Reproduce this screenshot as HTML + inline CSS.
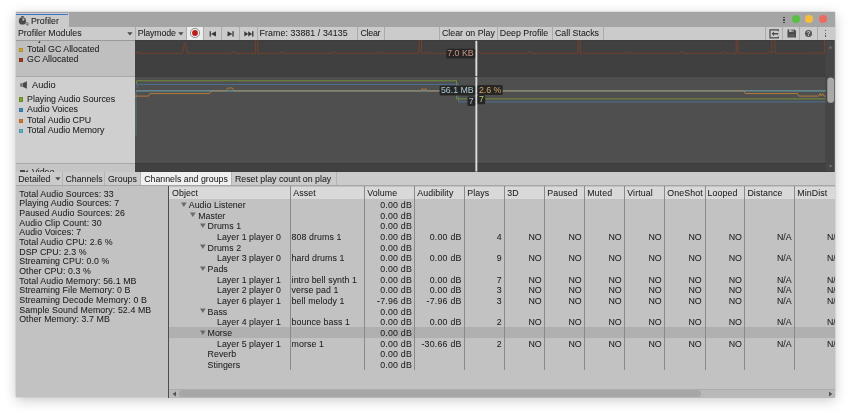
<!DOCTYPE html>
<html><head><meta charset="utf-8"><style>
html,body{margin:0;padding:0;background:#ffffff;width:850px;height:416px;overflow:hidden;position:relative}
#w div, #w svg{position:absolute}
.t{font-family:"Liberation Sans",sans-serif;-webkit-font-smoothing:antialiased;-webkit-text-stroke:0.05px currentColor;line-height:12px;white-space:nowrap}
</style></head><body><div style="position:absolute;left:15.5px;top:12.3px;width:819px;height:385.2px;box-shadow:0 3px 12px rgba(0,0,0,0.22),0 0 1.5px rgba(0,0,0,0.25)"></div><div id="w" style="position:absolute;left:0;top:0;width:834.5px;height:397.5px;overflow:hidden;will-change:transform">
<div style="left:15.5px;top:12.3px;width:819.0px;height:385.2px;background:#c2c2c2;"></div>
<div style="left:15.5px;top:12.3px;width:819.0px;height:14.5px;background:#a5a5a5;"></div>
<div style="left:15.5px;top:12.8px;width:53px;height:14px;background:#cbcbcb;"></div>
<div style="left:15.5px;top:13.9px;width:52.5px;height:1.4px;background:#3b72cc;"></div>
<svg style="left:18px;top:15px" width="12" height="12" viewBox="0 0 12 12"><rect x="3.2" y="1" width="2.6" height="1.1" rx="0.4" fill="#4a4a4a"/><circle cx="4.4" cy="5.9" r="3.6" fill="#4a4a4a"/><path d="M4.6 5.9 L4.6 3.3 A2.4 2.4 0 0 1 6.7 4.8 Z" fill="#d0d0d0"/><circle cx="8.9" cy="8.6" r="1.1" fill="none" stroke="#555" stroke-width="0.7"/><path d="M9.9 8.6 V10.8" stroke="#555" stroke-width="0.7"/></svg>
<div class="t" style="left:31px;top:15.25px;font-size:8.8px;color:#202020;">Profiler</div>
<div style="left:791.9px;top:15.3px;width:8.2px;height:8.2px;border-radius:50%;background:#57c142"></div>
<div style="left:805.3px;top:15.3px;width:8.2px;height:8.2px;border-radius:50%;background:#f6bd3b"></div>
<div style="left:818.9px;top:15.3px;width:8.2px;height:8.2px;border-radius:50%;background:#ed6a5e"></div>
<div style="left:783.2px;top:16.8px;width:1.4px;height:1.3px;background:#4a4a4a;"></div>
<div style="left:783.2px;top:19.3px;width:1.4px;height:1.3px;background:#4a4a4a;"></div>
<div style="left:783.2px;top:21.8px;width:1.4px;height:1.3px;background:#4a4a4a;"></div>
<div style="left:15.5px;top:26.5px;width:819.0px;height:13.5px;background:#cbcbcb;"></div>
<div style="left:15.5px;top:40px;width:819.0px;height:0.8px;background:#9a9a9a;"></div>
<div style="left:134.5px;top:26.5px;width:1px;height:13.5px;background:#ababab;"></div>
<div style="left:185.5px;top:26.5px;width:1px;height:13.5px;background:#ababab;"></div>
<div style="left:203.2px;top:26.5px;width:1px;height:13.5px;background:#ababab;"></div>
<div style="left:221.4px;top:26.5px;width:1px;height:13.5px;background:#ababab;"></div>
<div style="left:239.4px;top:26.5px;width:1px;height:13.5px;background:#ababab;"></div>
<div style="left:257.4px;top:26.5px;width:1px;height:13.5px;background:#ababab;"></div>
<div style="left:356.9px;top:26.5px;width:1px;height:13.5px;background:#ababab;"></div>
<div style="left:384px;top:26.5px;width:1px;height:13.5px;background:#ababab;"></div>
<div style="left:438.8px;top:26.5px;width:1px;height:13.5px;background:#ababab;"></div>
<div style="left:497px;top:26.5px;width:1px;height:13.5px;background:#ababab;"></div>
<div style="left:552.2px;top:26.5px;width:1px;height:13.5px;background:#ababab;"></div>
<div style="left:603.2px;top:26.5px;width:1px;height:13.5px;background:#ababab;"></div>
<div style="left:765px;top:26.5px;width:1px;height:13.5px;background:#ababab;"></div>
<div style="left:782.2px;top:26.5px;width:1px;height:13.5px;background:#ababab;"></div>
<div style="left:799.2px;top:26.5px;width:1px;height:13.5px;background:#ababab;"></div>
<div style="left:816.8px;top:26.5px;width:1px;height:13.5px;background:#ababab;"></div>
<div class="t" style="left:18px;top:27.35px;font-size:8.8px;color:#1c1c1c;">Profiler Modules</div>
<svg style="left:126.5px;top:31.8px" width="6" height="4" viewBox="0 0 6 4"><path d="M0.3 0.3 H5.5 L2.9 3.6 Z" fill="#4a4a4a"/></svg>
<div class="t" style="left:137.8px;top:27.35px;font-size:8.8px;color:#1c1c1c;letter-spacing:-0.16px;">Playmode</div>
<svg style="left:177.8px;top:31.8px" width="6" height="4" viewBox="0 0 6 4"><path d="M0.3 0.3 H5.5 L2.9 3.6 Z" fill="#4a4a4a"/></svg>
<div style="left:186.5px;top:26.7px;width:16.5px;height:13px;background:#ececec;"></div>
<svg style="left:189px;top:27px" width="12" height="12" viewBox="0 0 12 12"><circle cx="6" cy="6" r="4.6" fill="none" stroke="#7a7a7a" stroke-width="0.8"/><circle cx="6" cy="6" r="2.9" fill="#bb1f1b"/></svg>
<svg style="left:209px;top:30.5px" width="8" height="6" viewBox="0 0 8 6"><rect x="0.6" y="0.2" width="1.3" height="5.4" fill="#3a3a3a"/><path d="M7 0.2 V5.6 L1.9 2.9 Z" fill="#3a3a3a"/></svg>
<svg style="left:227px;top:30.5px" width="8" height="6" viewBox="0 0 8 6"><path d="M0.5 0.2 V5.6 L5.4 2.9 Z" fill="#3a3a3a"/><rect x="5.4" y="0.2" width="1.3" height="5.4" fill="#3a3a3a"/></svg>
<svg style="left:243.5px;top:30.5px" width="11" height="6" viewBox="0 0 11 6"><path d="M0.3 0.2 V5.6 L4.2 2.9 Z" fill="#3a3a3a"/><path d="M4.2 0.2 V5.6 L8.1 2.9 Z" fill="#3a3a3a"/><rect x="8.1" y="0.2" width="1.4" height="5.4" fill="#3a3a3a"/></svg>
<div class="t" style="left:259.6px;top:27.35px;font-size:8.8px;color:#1c1c1c;letter-spacing:0.08px;">Frame: 33881 / 34135</div>
<div class="t" style="left:360.4px;top:27.35px;font-size:8.8px;color:#1c1c1c;letter-spacing:-0.22px;">Clear</div>
<div class="t" style="left:442px;top:27.35px;font-size:8.8px;color:#1c1c1c;">Clear on Play</div>
<div class="t" style="left:499.8px;top:27.35px;font-size:8.8px;color:#1c1c1c;">Deep Profile</div>
<div class="t" style="left:555px;top:27.35px;font-size:8.8px;color:#1c1c1c;">Call Stacks</div>
<svg style="left:769px;top:28.8px" width="11" height="10" viewBox="0 0 11 10"><path d="M9.3 2.2 V0.8 H1 V8.8 H9.3 V7.4" fill="none" stroke="#4a4a4a" stroke-width="1.2"/><path d="M2.6 4.8 L5 2.6 V4.1 H9.4 V5.5 H5 V7 Z" fill="#4a4a4a"/></svg>
<svg style="left:786.5px;top:28.8px" width="10" height="10" viewBox="0 0 10 10"><path d="M0.5 0.5 H7.5 L9 2 V8.6 H0.5 Z" fill="#4a4a4a"/><rect x="2.2" y="0.5" width="4.2" height="2.4" fill="#cbcbcb"/><rect x="4.5" y="0.9" width="1.2" height="1.6" fill="#4a4a4a"/><rect x="2" y="5" width="5.5" height="3" fill="#5a5a5a"/></svg>
<div style="left:804.9px;top:29.8px;width:7px;height:7px;border-radius:50%;background:#555"></div>
<div class="t" style="left:805px;top:28.6px;width:7px;text-align:center;font-size:6.5px;font-weight:bold;color:#cbcbcb;line-height:9px">?</div>
<div style="left:824.9px;top:29.9px;width:1.3px;height:1.3px;background:#555555;"></div>
<div style="left:824.9px;top:32.6px;width:1.3px;height:1.3px;background:#555555;"></div>
<div style="left:824.9px;top:35.3px;width:1.3px;height:1.3px;background:#555555;"></div>
<div style="left:15.5px;top:40.8px;width:119.5px;height:131px;background:#a8a8a8;"></div>
<div style="left:15.5px;top:40.8px;width:119.5px;height:35.4px;background:#bfbfbf;"></div>
<div style="left:15.5px;top:77px;width:119.5px;height:85.8px;background:#cfcfcf;"></div>
<div style="left:15.5px;top:164px;width:119.5px;height:7.5px;background:#c5c5c5;"></div>
<div style="left:15px;top:40.8px;width:120px;height:2px;overflow:hidden;position:absolute"><div style="left:3.3px;top:-4px;width:4.3px;height:4.3px;background:#5a8a9a"></div><div class="t" style="left:12px;top:-8.40px;font-size:8.8px;color:#1c1c1c">Object Count</div></div>
<div style="left:18.7px;top:47.6px;width:4.4px;height:4.4px;background:#d2a42c;box-shadow:inset 0 0 0 0.6px rgba(0,0,0,0.22);"></div>
<div class="t" style="left:27.1px;top:43.05px;font-size:8.8px;color:#1c1c1c;">Total GC Allocated</div>
<div style="left:18.7px;top:57.8px;width:4.4px;height:4.4px;background:#a03a16;box-shadow:inset 0 0 0 0.6px rgba(0,0,0,0.22);"></div>
<div class="t" style="left:27.1px;top:53.25px;font-size:8.8px;color:#1c1c1c;">GC Allocated</div>
<svg style="left:19.5px;top:80.8px" width="8" height="8" viewBox="0 0 8 8"><rect x="0.4" y="2.3" width="1.3" height="3.4" fill="#4a4a4a"/><path d="M2.5 2.3 L6.9 0.3 V7.7 L2.5 5.7 Z" fill="#4a4a4a"/></svg>
<div class="t" style="left:32.1px;top:78.91px;font-size:9.2px;color:#1c1c1c;">Audio</div>
<div style="left:18.7px;top:97.4px;width:4.4px;height:4.4px;background:#7aa52a;box-shadow:inset 0 0 0 0.6px rgba(0,0,0,0.22);"></div>
<div class="t" style="left:27.1px;top:92.75px;font-size:8.8px;color:#1c1c1c;">Playing Audio Sources</div>
<div style="left:18.7px;top:107.95px;width:4.4px;height:4.4px;background:#3c8bbf;box-shadow:inset 0 0 0 0.6px rgba(0,0,0,0.22);"></div>
<div class="t" style="left:27.1px;top:103.30px;font-size:8.8px;color:#1c1c1c;">Audio Voices</div>
<div style="left:18.7px;top:118.5px;width:4.4px;height:4.4px;background:#d97a2a;box-shadow:inset 0 0 0 0.6px rgba(0,0,0,0.22);"></div>
<div class="t" style="left:27.1px;top:113.85px;font-size:8.8px;color:#1c1c1c;">Total Audio CPU</div>
<div style="left:18.7px;top:129.05px;width:4.4px;height:4.4px;background:#59b2c6;box-shadow:inset 0 0 0 0.6px rgba(0,0,0,0.22);"></div>
<div class="t" style="left:27.1px;top:124.40px;font-size:8.8px;color:#1c1c1c;">Total Audio Memory</div>
<div style="left:15px;top:164px;width:120px;height:7.5px;overflow:hidden;position:absolute"><svg style="left:5px;top:5.5px" width="8" height="6" viewBox="0 0 8 6"><rect x="0" y="0" width="5" height="6" fill="#4a4a4a"/><path d="M5 2 L8 0 V6 L5 4Z" fill="#4a4a4a"/></svg><div class="t" style="left:17px;top:2.45px;font-size:8.8px;color:#1c1c1c">Video</div></div>
<svg style="left:135px;top:40px" width="699.5" height="132" viewBox="135 40 699.5 132"><rect x="135" y="40" width="699.5" height="132" fill="#3c3c3c"/><rect x="135" y="40.8" width="690.7" height="35.6" fill="#404040"/><rect x="135" y="77" width="690.7" height="86" fill="#4f4f4f"/><rect x="135" y="164" width="690.7" height="7.5" fill="#414141"/><rect x="825.7" y="40.8" width="8.799999999999955" height="130.7" fill="#464646"/><rect x="827.3" y="77.6" width="6.8" height="25.2" rx="3.4" fill="#a9a9a9"/><path d="M828.5 48.5 L830.6 45.8 L832.7 48.5Z" fill="#6a6a6a"/><path d="M828.5 165 L830.6 167.7 L832.7 165Z" fill="#6a6a6a"/><path d="M135,51.8 L136.5,53.3 L136.4,53.3 L138.0,51.3 L139.6,53.3 L182.6,53.3 L184.6,42.6 L185.4,42.6 L187.6,53.3 L231.4,53.3 L233,51.3 L234.6,53.3 L255.6,53.3 L255.6,40 M257.8,40 L257.8,53.3 L280.4,53.3 L282,51.3 L283.6,53.3 L332.4,53.3 L334,51.3 L335.6,53.3 L379.4,53.3 L381,51.3 L382.6,53.3 L419.2,53.3 L419.2,40 M421.6,40 L421.6,53.3 L425.4,53.3 L427,51.3 L428.6,53.3 L477.4,53.3 L479,51.3 L480.6,53.3 L527.8,53.3 L529.4,51.3 L531.0,53.3 L578,53.3 L578,40 M580.2,40 L580.2,53.3 L627.4,53.3 L629,51.3 L630.6,53.3 L679.8,53.3 L681.4,51.3 L683.0,53.3 L722.6999999999999,53.3 L724.3,51.3 L725.9,53.3 L736.2,53.3 L736.2,40 M738,40 L738,53.3 L767.8,53.3 L769.4,51.3 L771.0,53.3 L771.8,53.3 L771.8,40 M775,40 L775,53.3 L814.4,53.3 L816,51.3 L817.6,53.3 L824.5,53.3 L824.5,40" fill="none" stroke="#74402c" stroke-width="1"/><path d="M137.2,88 L137.2,84.4 L458.6,84.4 L458.6,101.9 L825.7,101.9" fill="none" stroke="#4a7194" stroke-width="1"/><path d="M136.6,84 L136.6,80.8 L456.6,80.8 L456.6,98.9 L825.7,98.9" fill="none" stroke="#738e3c" stroke-width="1"/><path d="M136,90.9 L825.7,90.9" fill="none" stroke="#6b9ba6" stroke-width="1"/><path d="M136,135.5 V90.9" fill="none" stroke="#5f8f8a" stroke-width="0.8" stroke-opacity="0.7"/><path d="M135,96.1 L148.5,96.1 L150,93.5 L209.5,93.5 L211,90.9 L226.4,90.9 L227.6,88 L232.6,88 L234,90.9 L421,90.9 L422.5,88.3 L424,90.9 L425.5,88.3 L427,90.9 L744,90.9 L745.2,93.5 L797.5,93.5 L798.8,96.1 L818.6,96.1 L820,93.5 L821.3,96.1 L822.6,93.5 L824,96.1 L825.7,96.1" fill="none" stroke="#b27a3c" stroke-width="1"/><path d="M136,90.9 L825.7,90.9" fill="none" stroke="#6b9ba6" stroke-width="1" stroke-opacity="0.5"/><rect x="475.4" y="40.8" width="1.9" height="35.4" fill="#dddddd"/><rect x="475.4" y="77" width="1.9" height="94.5" fill="#dddddd"/><rect x="446.3" y="48.8" width="28.899999999999977" height="9.800000000000004" rx="1.5" fill="#262626"/><text x="473.7" y="56.300000000000004" text-anchor="end" font-family="Liberation Sans" font-size="8.8" fill="#c99580">7.0 KB</text><rect x="439.5" y="85.6" width="35.69999999999999" height="10.0" rx="1.5" fill="#262626"/><text x="473.7" y="93.3" text-anchor="end" font-family="Liberation Sans" font-size="8.8" fill="#a9c9d2">56.1 MB</text><rect x="467.4" y="96.4" width="7.800000000000011" height="9.5" rx="1.5" fill="#262626"/><text x="473.7" y="103.60000000000001" text-anchor="end" font-family="Liberation Sans" font-size="8.8" fill="#a4bcd6">7</text><rect x="477.4" y="85" width="25.30000000000001" height="10" rx="1.5" fill="#262626"/><text x="478.9" y="92.7" text-anchor="start" font-family="Liberation Sans" font-size="8.8" fill="#d4a565">2.6 %</text><rect x="477.4" y="95" width="7.800000000000011" height="9.299999999999997" rx="1.5" fill="#262626"/><text x="478.9" y="102.0" text-anchor="start" font-family="Liberation Sans" font-size="8.8" fill="#bcca7c">7</text></svg>
<div style="left:15.5px;top:171.5px;width:819.0px;height:13.7px;background:#cbcbcb;"></div>
<div style="left:141px;top:171.5px;width:90px;height:13.5px;background:#f0f0f0;"></div>
<div style="left:62px;top:171.6px;width:1px;height:13.4px;background:#b4b4b4;"></div>
<div style="left:104.4px;top:171.6px;width:1px;height:13.4px;background:#b4b4b4;"></div>
<div style="left:140.4px;top:171.6px;width:1px;height:13.4px;background:#b4b4b4;"></div>
<div style="left:231px;top:171.6px;width:1px;height:13.4px;background:#b4b4b4;"></div>
<div style="left:336px;top:171.6px;width:1px;height:13.4px;background:#b4b4b4;"></div>
<div class="t" style="left:18.2px;top:172.95px;font-size:8.8px;color:#1c1c1c;">Detailed</div>
<svg style="left:54.5px;top:177.3px" width="6" height="4" viewBox="0 0 6 4"><path d="M0.3 0.3 H5.5 L2.9 3.6 Z" fill="#4a4a4a"/></svg>
<div class="t" style="left:65.4px;top:172.95px;font-size:8.8px;color:#1c1c1c;">Channels</div>
<div class="t" style="left:108px;top:172.95px;font-size:8.8px;color:#1c1c1c;">Groups</div>
<div class="t" style="left:144.2px;top:172.95px;font-size:8.8px;color:#1c1c1c;">Channels and groups</div>
<div class="t" style="left:234.9px;top:172.95px;font-size:8.8px;color:#1c1c1c;">Reset play count on play</div>
<div style="left:15.5px;top:185.2px;width:819.0px;height:1.2px;background:#a6a6a6;"></div>
<div class="t" style="left:19.2px;top:187.55px;font-size:8.8px;color:#1c1c1c;letter-spacing:0.09px;">Total Audio Sources: 33</div>
<div class="t" style="left:19.2px;top:197.23px;font-size:8.8px;color:#1c1c1c;letter-spacing:0.09px;">Playing Audio Sources: 7</div>
<div class="t" style="left:19.2px;top:206.91px;font-size:8.8px;color:#1c1c1c;letter-spacing:0.09px;">Paused Audio Sources: 26</div>
<div class="t" style="left:19.2px;top:216.59px;font-size:8.8px;color:#1c1c1c;letter-spacing:0.09px;">Audio Clip Count: 30</div>
<div class="t" style="left:19.2px;top:226.27px;font-size:8.8px;color:#1c1c1c;letter-spacing:0.09px;">Audio Voices: 7</div>
<div class="t" style="left:19.2px;top:235.95px;font-size:8.8px;color:#1c1c1c;letter-spacing:0.09px;">Total Audio CPU: 2.6 %</div>
<div class="t" style="left:19.2px;top:245.63px;font-size:8.8px;color:#1c1c1c;letter-spacing:0.09px;">DSP CPU: 2.3 %</div>
<div class="t" style="left:19.2px;top:255.31px;font-size:8.8px;color:#1c1c1c;letter-spacing:0.09px;">Streaming CPU: 0.0 %</div>
<div class="t" style="left:19.2px;top:264.99px;font-size:8.8px;color:#1c1c1c;letter-spacing:0.09px;">Other CPU: 0.3 %</div>
<div class="t" style="left:19.2px;top:274.67px;font-size:8.8px;color:#1c1c1c;letter-spacing:0.09px;">Total Audio Memory: 56.1 MB</div>
<div class="t" style="left:19.2px;top:284.35px;font-size:8.8px;color:#1c1c1c;letter-spacing:0.09px;">Streaming File Memory: 0 B</div>
<div class="t" style="left:19.2px;top:294.03px;font-size:8.8px;color:#1c1c1c;letter-spacing:0.09px;">Streaming Decode Memory: 0 B</div>
<div class="t" style="left:19.2px;top:303.71px;font-size:8.8px;color:#1c1c1c;letter-spacing:0.09px;">Sample Sound Memory: 52.4 MB</div>
<div class="t" style="left:19.2px;top:313.39px;font-size:8.8px;color:#1c1c1c;letter-spacing:0.09px;">Other Memory: 3.7 MB</div>
<div style="left:168px;top:186px;width:1px;height:211.5px;background:#4d4d4d;"></div>
<div style="left:169px;top:186.5px;width:665.5px;height:12.8px;background:#d9d9d9;"></div>
<div style="left:169px;top:199.3px;width:665.5px;height:190px;background:#c2c2c2;"></div>
<div style="left:169px;top:327.34000000000003px;width:665.5px;height:10.67px;background:#b0b0b0;"></div>
<div style="left:290.3px;top:186px;width:1px;height:184.01999999999998px;background:#8a8a8a;"></div>
<div style="left:364.3px;top:186px;width:1px;height:184.01999999999998px;background:#8a8a8a;"></div>
<div style="left:414.2px;top:186px;width:1px;height:184.01999999999998px;background:#8a8a8a;"></div>
<div style="left:464.3px;top:186px;width:1px;height:184.01999999999998px;background:#8a8a8a;"></div>
<div style="left:504.2px;top:186px;width:1px;height:184.01999999999998px;background:#8a8a8a;"></div>
<div style="left:544.3px;top:186px;width:1px;height:184.01999999999998px;background:#8a8a8a;"></div>
<div style="left:584.2px;top:186px;width:1px;height:184.01999999999998px;background:#8a8a8a;"></div>
<div style="left:624.3px;top:186px;width:1px;height:184.01999999999998px;background:#8a8a8a;"></div>
<div style="left:664.3px;top:186px;width:1px;height:184.01999999999998px;background:#8a8a8a;"></div>
<div style="left:704.5px;top:186px;width:1px;height:184.01999999999998px;background:#8a8a8a;"></div>
<div style="left:744.4px;top:186px;width:1px;height:184.01999999999998px;background:#8a8a8a;"></div>
<div style="left:794.3px;top:186px;width:1px;height:184.01999999999998px;background:#8a8a8a;"></div>
<div class="t" style="left:172px;top:187.25px;font-size:8.8px;color:#1c1c1c;letter-spacing:0.1px;">Object</div>
<div class="t" style="left:293.3px;top:187.25px;font-size:8.8px;color:#1c1c1c;letter-spacing:0.1px;">Asset</div>
<div class="t" style="left:367.3px;top:187.25px;font-size:8.8px;color:#1c1c1c;letter-spacing:0.1px;">Volume</div>
<div class="t" style="left:417.2px;top:187.25px;font-size:8.8px;color:#1c1c1c;letter-spacing:0.1px;">Audibility</div>
<div class="t" style="left:467.3px;top:187.25px;font-size:8.8px;color:#1c1c1c;letter-spacing:0.1px;">Plays</div>
<div class="t" style="left:507.2px;top:187.25px;font-size:8.8px;color:#1c1c1c;letter-spacing:0.1px;">3D</div>
<div class="t" style="left:547.3px;top:187.25px;font-size:8.8px;color:#1c1c1c;letter-spacing:0.1px;">Paused</div>
<div class="t" style="left:587.2px;top:187.25px;font-size:8.8px;color:#1c1c1c;letter-spacing:0.1px;">Muted</div>
<div class="t" style="left:627.3px;top:187.25px;font-size:8.8px;color:#1c1c1c;letter-spacing:0.1px;">Virtual</div>
<div class="t" style="left:667.3px;top:187.25px;font-size:8.8px;color:#1c1c1c;letter-spacing:0.1px;">OneShot</div>
<div class="t" style="left:707.5px;top:187.25px;font-size:8.8px;color:#1c1c1c;letter-spacing:0.1px;">Looped</div>
<div class="t" style="left:747.4px;top:187.25px;font-size:8.8px;color:#1c1c1c;letter-spacing:0.1px;">Distance</div>
<div class="t" style="left:797.3px;top:187.25px;font-size:8.8px;color:#1c1c1c;letter-spacing:0.1px;">MinDist</div>
<svg style="left:180.85px;top:201.70px" width="6" height="6" viewBox="0 0 6 6"><path d="M0 0.4 H5.6 L2.8 5.1 Z" fill="#6a6a6a"/></svg>
<div class="t" style="left:188.75px;top:198.85px;font-size:8.8px;color:#1c1c1c;letter-spacing:0.05px;">Audio Listener</div>
<div class="t" style="left:352px;top:198.85px;width:60px;text-align:right;font-size:8.8px;color:#1c1c1c;letter-spacing:0.22px;">0.00 dB</div>
<svg style="left:190.25px;top:212.37px" width="6" height="6" viewBox="0 0 6 6"><path d="M0 0.4 H5.6 L2.8 5.1 Z" fill="#6a6a6a"/></svg>
<div class="t" style="left:198.15px;top:209.52px;font-size:8.8px;color:#1c1c1c;letter-spacing:0.05px;">Master</div>
<div class="t" style="left:352px;top:209.52px;width:60px;text-align:right;font-size:8.8px;color:#1c1c1c;letter-spacing:0.22px;">0.00 dB</div>
<svg style="left:199.65px;top:223.04px" width="6" height="6" viewBox="0 0 6 6"><path d="M0 0.4 H5.6 L2.8 5.1 Z" fill="#6a6a6a"/></svg>
<div class="t" style="left:207.55px;top:220.19px;font-size:8.8px;color:#1c1c1c;letter-spacing:0.05px;">Drums 1</div>
<div class="t" style="left:352px;top:220.19px;width:60px;text-align:right;font-size:8.8px;color:#1c1c1c;letter-spacing:0.22px;">0.00 dB</div>
<div class="t" style="left:216.95px;top:230.86px;font-size:8.8px;color:#1c1c1c;letter-spacing:0.05px;">Layer 1 player 0</div>
<div class="t" style="left:291.6px;top:230.86px;font-size:8.8px;color:#1c1c1c;letter-spacing:0.08px;">808 drums 1</div>
<div class="t" style="left:352px;top:230.86px;width:60px;text-align:right;font-size:8.8px;color:#1c1c1c;letter-spacing:0.22px;">0.00 dB</div>
<div class="t" style="left:401.6px;top:230.86px;width:60px;text-align:right;font-size:8.8px;color:#1c1c1c;letter-spacing:0.22px;">0.00 dB</div>
<div class="t" style="left:461.6px;top:230.86px;width:40px;text-align:right;font-size:8.8px;color:#1c1c1c;">4</div>
<div class="t" style="left:501.6px;top:230.86px;width:40px;text-align:right;font-size:8.8px;color:#1c1c1c;">NO</div>
<div class="t" style="left:541.6999999999999px;top:230.86px;width:40px;text-align:right;font-size:8.8px;color:#1c1c1c;">NO</div>
<div class="t" style="left:581.6px;top:230.86px;width:40px;text-align:right;font-size:8.8px;color:#1c1c1c;">NO</div>
<div class="t" style="left:621.6999999999999px;top:230.86px;width:40px;text-align:right;font-size:8.8px;color:#1c1c1c;">NO</div>
<div class="t" style="left:661.6999999999999px;top:230.86px;width:40px;text-align:right;font-size:8.8px;color:#1c1c1c;">NO</div>
<div class="t" style="left:701.9px;top:230.86px;width:40px;text-align:right;font-size:8.8px;color:#1c1c1c;">NO</div>
<div class="t" style="left:751.6px;top:230.86px;width:40px;text-align:right;font-size:8.8px;color:#1c1c1c;">N/A</div>
<div class="t" style="left:801.6px;top:230.86px;width:40px;text-align:right;font-size:8.8px;color:#1c1c1c;">N/A</div>
<svg style="left:199.65px;top:244.38px" width="6" height="6" viewBox="0 0 6 6"><path d="M0 0.4 H5.6 L2.8 5.1 Z" fill="#6a6a6a"/></svg>
<div class="t" style="left:207.55px;top:241.53px;font-size:8.8px;color:#1c1c1c;letter-spacing:0.05px;">Drums 2</div>
<div class="t" style="left:352px;top:241.53px;width:60px;text-align:right;font-size:8.8px;color:#1c1c1c;letter-spacing:0.22px;">0.00 dB</div>
<div class="t" style="left:216.95px;top:252.20px;font-size:8.8px;color:#1c1c1c;letter-spacing:0.05px;">Layer 3 player 0</div>
<div class="t" style="left:291.6px;top:252.20px;font-size:8.8px;color:#1c1c1c;letter-spacing:0.08px;">hard drums 1</div>
<div class="t" style="left:352px;top:252.20px;width:60px;text-align:right;font-size:8.8px;color:#1c1c1c;letter-spacing:0.22px;">0.00 dB</div>
<div class="t" style="left:401.6px;top:252.20px;width:60px;text-align:right;font-size:8.8px;color:#1c1c1c;letter-spacing:0.22px;">0.00 dB</div>
<div class="t" style="left:461.6px;top:252.20px;width:40px;text-align:right;font-size:8.8px;color:#1c1c1c;">9</div>
<div class="t" style="left:501.6px;top:252.20px;width:40px;text-align:right;font-size:8.8px;color:#1c1c1c;">NO</div>
<div class="t" style="left:541.6999999999999px;top:252.20px;width:40px;text-align:right;font-size:8.8px;color:#1c1c1c;">NO</div>
<div class="t" style="left:581.6px;top:252.20px;width:40px;text-align:right;font-size:8.8px;color:#1c1c1c;">NO</div>
<div class="t" style="left:621.6999999999999px;top:252.20px;width:40px;text-align:right;font-size:8.8px;color:#1c1c1c;">NO</div>
<div class="t" style="left:661.6999999999999px;top:252.20px;width:40px;text-align:right;font-size:8.8px;color:#1c1c1c;">NO</div>
<div class="t" style="left:701.9px;top:252.20px;width:40px;text-align:right;font-size:8.8px;color:#1c1c1c;">NO</div>
<div class="t" style="left:751.6px;top:252.20px;width:40px;text-align:right;font-size:8.8px;color:#1c1c1c;">N/A</div>
<div class="t" style="left:801.6px;top:252.20px;width:40px;text-align:right;font-size:8.8px;color:#1c1c1c;">N/A</div>
<svg style="left:199.65px;top:265.72px" width="6" height="6" viewBox="0 0 6 6"><path d="M0 0.4 H5.6 L2.8 5.1 Z" fill="#6a6a6a"/></svg>
<div class="t" style="left:207.55px;top:262.87px;font-size:8.8px;color:#1c1c1c;letter-spacing:0.05px;">Pads</div>
<div class="t" style="left:352px;top:262.87px;width:60px;text-align:right;font-size:8.8px;color:#1c1c1c;letter-spacing:0.22px;">0.00 dB</div>
<div class="t" style="left:216.95px;top:273.54px;font-size:8.8px;color:#1c1c1c;letter-spacing:0.05px;">Layer 1 player 1</div>
<div class="t" style="left:291.6px;top:273.54px;font-size:8.8px;color:#1c1c1c;letter-spacing:0.08px;">intro bell synth 1</div>
<div class="t" style="left:352px;top:273.54px;width:60px;text-align:right;font-size:8.8px;color:#1c1c1c;letter-spacing:0.22px;">0.00 dB</div>
<div class="t" style="left:401.6px;top:273.54px;width:60px;text-align:right;font-size:8.8px;color:#1c1c1c;letter-spacing:0.22px;">0.00 dB</div>
<div class="t" style="left:461.6px;top:273.54px;width:40px;text-align:right;font-size:8.8px;color:#1c1c1c;">7</div>
<div class="t" style="left:501.6px;top:273.54px;width:40px;text-align:right;font-size:8.8px;color:#1c1c1c;">NO</div>
<div class="t" style="left:541.6999999999999px;top:273.54px;width:40px;text-align:right;font-size:8.8px;color:#1c1c1c;">NO</div>
<div class="t" style="left:581.6px;top:273.54px;width:40px;text-align:right;font-size:8.8px;color:#1c1c1c;">NO</div>
<div class="t" style="left:621.6999999999999px;top:273.54px;width:40px;text-align:right;font-size:8.8px;color:#1c1c1c;">NO</div>
<div class="t" style="left:661.6999999999999px;top:273.54px;width:40px;text-align:right;font-size:8.8px;color:#1c1c1c;">NO</div>
<div class="t" style="left:701.9px;top:273.54px;width:40px;text-align:right;font-size:8.8px;color:#1c1c1c;">NO</div>
<div class="t" style="left:751.6px;top:273.54px;width:40px;text-align:right;font-size:8.8px;color:#1c1c1c;">N/A</div>
<div class="t" style="left:801.6px;top:273.54px;width:40px;text-align:right;font-size:8.8px;color:#1c1c1c;">N/A</div>
<div class="t" style="left:216.95px;top:284.21px;font-size:8.8px;color:#1c1c1c;letter-spacing:0.05px;">Layer 2 player 0</div>
<div class="t" style="left:291.6px;top:284.21px;font-size:8.8px;color:#1c1c1c;letter-spacing:0.08px;">verse pad 1</div>
<div class="t" style="left:352px;top:284.21px;width:60px;text-align:right;font-size:8.8px;color:#1c1c1c;letter-spacing:0.22px;">0.00 dB</div>
<div class="t" style="left:401.6px;top:284.21px;width:60px;text-align:right;font-size:8.8px;color:#1c1c1c;letter-spacing:0.22px;">0.00 dB</div>
<div class="t" style="left:461.6px;top:284.21px;width:40px;text-align:right;font-size:8.8px;color:#1c1c1c;">3</div>
<div class="t" style="left:501.6px;top:284.21px;width:40px;text-align:right;font-size:8.8px;color:#1c1c1c;">NO</div>
<div class="t" style="left:541.6999999999999px;top:284.21px;width:40px;text-align:right;font-size:8.8px;color:#1c1c1c;">NO</div>
<div class="t" style="left:581.6px;top:284.21px;width:40px;text-align:right;font-size:8.8px;color:#1c1c1c;">NO</div>
<div class="t" style="left:621.6999999999999px;top:284.21px;width:40px;text-align:right;font-size:8.8px;color:#1c1c1c;">NO</div>
<div class="t" style="left:661.6999999999999px;top:284.21px;width:40px;text-align:right;font-size:8.8px;color:#1c1c1c;">NO</div>
<div class="t" style="left:701.9px;top:284.21px;width:40px;text-align:right;font-size:8.8px;color:#1c1c1c;">NO</div>
<div class="t" style="left:751.6px;top:284.21px;width:40px;text-align:right;font-size:8.8px;color:#1c1c1c;">N/A</div>
<div class="t" style="left:801.6px;top:284.21px;width:40px;text-align:right;font-size:8.8px;color:#1c1c1c;">N/A</div>
<div class="t" style="left:216.95px;top:294.88px;font-size:8.8px;color:#1c1c1c;letter-spacing:0.05px;">Layer 6 player 1</div>
<div class="t" style="left:291.6px;top:294.88px;font-size:8.8px;color:#1c1c1c;letter-spacing:0.08px;">bell melody 1</div>
<div class="t" style="left:352px;top:294.88px;width:60px;text-align:right;font-size:8.8px;color:#1c1c1c;letter-spacing:0.22px;">-7.96 dB</div>
<div class="t" style="left:401.6px;top:294.88px;width:60px;text-align:right;font-size:8.8px;color:#1c1c1c;letter-spacing:0.22px;">-7.96 dB</div>
<div class="t" style="left:461.6px;top:294.88px;width:40px;text-align:right;font-size:8.8px;color:#1c1c1c;">3</div>
<div class="t" style="left:501.6px;top:294.88px;width:40px;text-align:right;font-size:8.8px;color:#1c1c1c;">NO</div>
<div class="t" style="left:541.6999999999999px;top:294.88px;width:40px;text-align:right;font-size:8.8px;color:#1c1c1c;">NO</div>
<div class="t" style="left:581.6px;top:294.88px;width:40px;text-align:right;font-size:8.8px;color:#1c1c1c;">NO</div>
<div class="t" style="left:621.6999999999999px;top:294.88px;width:40px;text-align:right;font-size:8.8px;color:#1c1c1c;">NO</div>
<div class="t" style="left:661.6999999999999px;top:294.88px;width:40px;text-align:right;font-size:8.8px;color:#1c1c1c;">NO</div>
<div class="t" style="left:701.9px;top:294.88px;width:40px;text-align:right;font-size:8.8px;color:#1c1c1c;">NO</div>
<div class="t" style="left:751.6px;top:294.88px;width:40px;text-align:right;font-size:8.8px;color:#1c1c1c;">N/A</div>
<div class="t" style="left:801.6px;top:294.88px;width:40px;text-align:right;font-size:8.8px;color:#1c1c1c;">N/A</div>
<svg style="left:199.65px;top:308.40px" width="6" height="6" viewBox="0 0 6 6"><path d="M0 0.4 H5.6 L2.8 5.1 Z" fill="#6a6a6a"/></svg>
<div class="t" style="left:207.55px;top:305.55px;font-size:8.8px;color:#1c1c1c;letter-spacing:0.05px;">Bass</div>
<div class="t" style="left:352px;top:305.55px;width:60px;text-align:right;font-size:8.8px;color:#1c1c1c;letter-spacing:0.22px;">0.00 dB</div>
<div class="t" style="left:216.95px;top:316.22px;font-size:8.8px;color:#1c1c1c;letter-spacing:0.05px;">Layer 4 player 1</div>
<div class="t" style="left:291.6px;top:316.22px;font-size:8.8px;color:#1c1c1c;letter-spacing:0.08px;">bounce bass 1</div>
<div class="t" style="left:352px;top:316.22px;width:60px;text-align:right;font-size:8.8px;color:#1c1c1c;letter-spacing:0.22px;">0.00 dB</div>
<div class="t" style="left:401.6px;top:316.22px;width:60px;text-align:right;font-size:8.8px;color:#1c1c1c;letter-spacing:0.22px;">0.00 dB</div>
<div class="t" style="left:461.6px;top:316.22px;width:40px;text-align:right;font-size:8.8px;color:#1c1c1c;">2</div>
<div class="t" style="left:501.6px;top:316.22px;width:40px;text-align:right;font-size:8.8px;color:#1c1c1c;">NO</div>
<div class="t" style="left:541.6999999999999px;top:316.22px;width:40px;text-align:right;font-size:8.8px;color:#1c1c1c;">NO</div>
<div class="t" style="left:581.6px;top:316.22px;width:40px;text-align:right;font-size:8.8px;color:#1c1c1c;">NO</div>
<div class="t" style="left:621.6999999999999px;top:316.22px;width:40px;text-align:right;font-size:8.8px;color:#1c1c1c;">NO</div>
<div class="t" style="left:661.6999999999999px;top:316.22px;width:40px;text-align:right;font-size:8.8px;color:#1c1c1c;">NO</div>
<div class="t" style="left:701.9px;top:316.22px;width:40px;text-align:right;font-size:8.8px;color:#1c1c1c;">NO</div>
<div class="t" style="left:751.6px;top:316.22px;width:40px;text-align:right;font-size:8.8px;color:#1c1c1c;">N/A</div>
<div class="t" style="left:801.6px;top:316.22px;width:40px;text-align:right;font-size:8.8px;color:#1c1c1c;">N/A</div>
<svg style="left:199.65px;top:329.74px" width="6" height="6" viewBox="0 0 6 6"><path d="M0 0.4 H5.6 L2.8 5.1 Z" fill="#6a6a6a"/></svg>
<div class="t" style="left:207.55px;top:326.89px;font-size:8.8px;color:#1c1c1c;letter-spacing:0.05px;">Morse</div>
<div class="t" style="left:352px;top:326.89px;width:60px;text-align:right;font-size:8.8px;color:#1c1c1c;letter-spacing:0.22px;">0.00 dB</div>
<div class="t" style="left:216.95px;top:337.56px;font-size:8.8px;color:#1c1c1c;letter-spacing:0.05px;">Layer 5 player 1</div>
<div class="t" style="left:291.6px;top:337.56px;font-size:8.8px;color:#1c1c1c;letter-spacing:0.08px;">morse 1</div>
<div class="t" style="left:352px;top:337.56px;width:60px;text-align:right;font-size:8.8px;color:#1c1c1c;letter-spacing:0.22px;">0.00 dB</div>
<div class="t" style="left:401.6px;top:337.56px;width:60px;text-align:right;font-size:8.8px;color:#1c1c1c;letter-spacing:0.22px;">-30.66 dB</div>
<div class="t" style="left:461.6px;top:337.56px;width:40px;text-align:right;font-size:8.8px;color:#1c1c1c;">2</div>
<div class="t" style="left:501.6px;top:337.56px;width:40px;text-align:right;font-size:8.8px;color:#1c1c1c;">NO</div>
<div class="t" style="left:541.6999999999999px;top:337.56px;width:40px;text-align:right;font-size:8.8px;color:#1c1c1c;">NO</div>
<div class="t" style="left:581.6px;top:337.56px;width:40px;text-align:right;font-size:8.8px;color:#1c1c1c;">NO</div>
<div class="t" style="left:621.6999999999999px;top:337.56px;width:40px;text-align:right;font-size:8.8px;color:#1c1c1c;">NO</div>
<div class="t" style="left:661.6999999999999px;top:337.56px;width:40px;text-align:right;font-size:8.8px;color:#1c1c1c;">NO</div>
<div class="t" style="left:701.9px;top:337.56px;width:40px;text-align:right;font-size:8.8px;color:#1c1c1c;">NO</div>
<div class="t" style="left:751.6px;top:337.56px;width:40px;text-align:right;font-size:8.8px;color:#1c1c1c;">N/A</div>
<div class="t" style="left:801.6px;top:337.56px;width:40px;text-align:right;font-size:8.8px;color:#1c1c1c;">N/A</div>
<div class="t" style="left:207.55px;top:348.23px;font-size:8.8px;color:#1c1c1c;letter-spacing:0.05px;">Reverb</div>
<div class="t" style="left:352px;top:348.23px;width:60px;text-align:right;font-size:8.8px;color:#1c1c1c;letter-spacing:0.22px;">0.00 dB</div>
<div class="t" style="left:207.55px;top:358.90px;font-size:8.8px;color:#1c1c1c;letter-spacing:0.05px;">Stingers</div>
<div class="t" style="left:352px;top:358.90px;width:60px;text-align:right;font-size:8.8px;color:#1c1c1c;letter-spacing:0.22px;">0.00 dB</div>
<div style="left:169px;top:389px;width:665.5px;height:8.5px;background:#b9b9b9;"></div>
<div style="left:169px;top:388.6px;width:665.5px;height:0.6px;background:#adadad;"></div>
<div style="left:179.4px;top:390px;width:522px;height:6.8px;background:#a7a7a7;border-radius:3.4px;"></div>
<svg style="left:172px;top:390.5px" width="5" height="6" viewBox="0 0 5 6"><path d="M4 0.4 V5.4 L0.6 2.9Z" fill="#555"/></svg>
<svg style="left:827.5px;top:390.5px" width="5" height="6" viewBox="0 0 5 6"><path d="M1 0.4 V5.4 L4.4 2.9Z" fill="#555"/></svg>
</div>

</body></html>
